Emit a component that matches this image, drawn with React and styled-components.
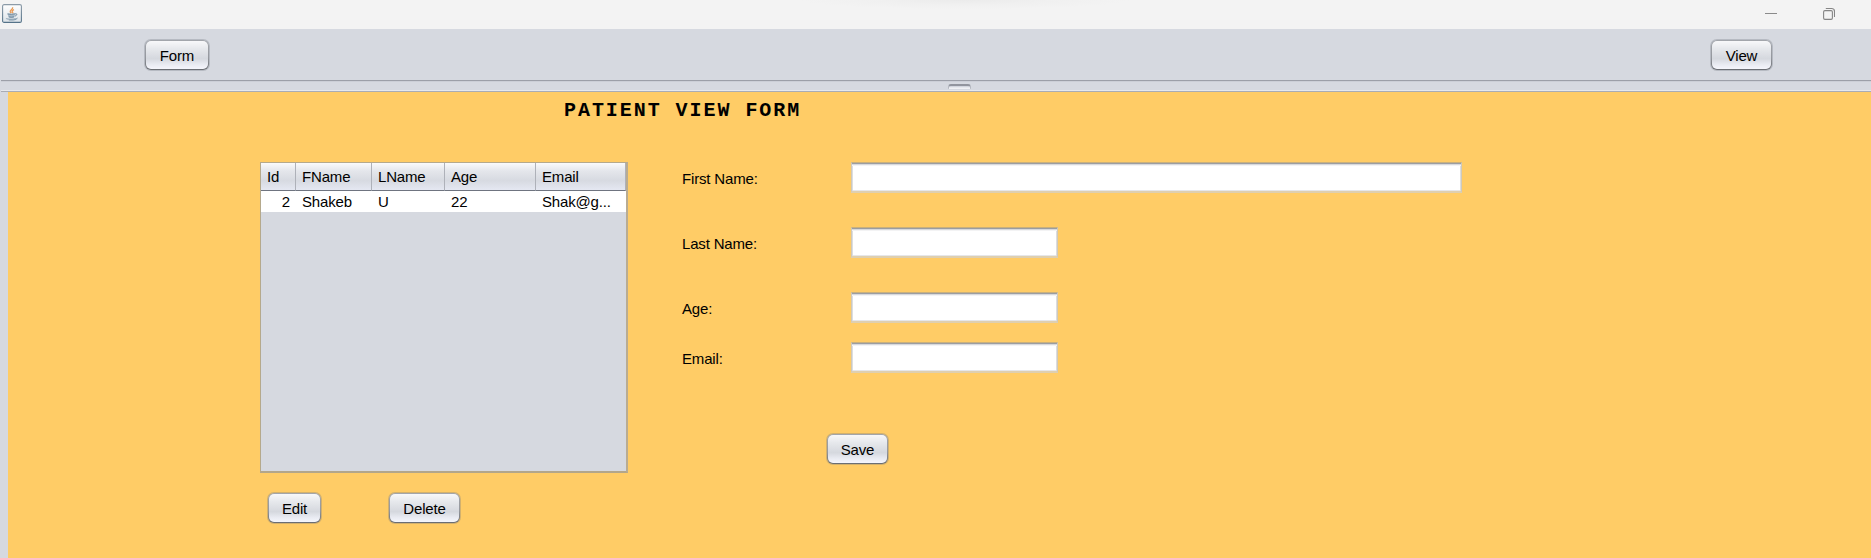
import React from "react";
import styled, { createGlobalStyle } from "styled-components";

const Global = createGlobalStyle`
  * { box-sizing: border-box; }
  body { margin: 0; overflow: hidden; font: 15px "Liberation Sans", Arial, sans-serif; letter-spacing: -0.17px; color: #000; }
`;

const Window = styled.div`
  display: flex;
  flex-direction: column;
  width: 1871px;
  height: 558px;
  background: #d6d9e0;
`;

const TitleBar = styled.header`
  display: flex;
  justify-content: space-between;
  height: 29px;
  padding: 4px 36px 0 2px;
  background: radial-gradient(ellipse 165px 9px at 965px 0, #ebebeb 0%, #f0f0f0 50%, #f3f3f3 100%) #f3f3f3;
`;

const Controls = styled.div`
  display: flex;
  gap: 46px;
`;

const Toolbar = styled.div`
  display: flex;
  justify-content: space-between;
  height: 51px;
  padding: 10px 98px 0 144px;
`;

const Button = styled.button`
  width: ${(p) => p.$width - 2}px;
  height: 30px;
  margin: 1px;
  padding: 1px 0 0;
  border: 1px solid transparent;
  border-bottom-width: 1.5px;
  border-radius: 6px;
  font: inherit;
  letter-spacing: inherit;
  color: #000;
  background:
    linear-gradient(#f8f8fa 0%, #e6e8ec 28%, #d5d8de 63%, #e9ebf2 84%, #f5f6fc 100%) padding-box,
    linear-gradient(#a3a6ac 0%, #94979d 60%, #696c72 100%) border-box;
  box-shadow: 0 0 0 1px rgba(110, 115, 125, 0.3);
`;

const Divider = styled.div`
  display: flex;
  height: 12px;
  margin-left: 1px;
  padding: 3px 0 0 947px;
  border-top: 1px solid #9c9fa8;
  border-bottom: 1px solid #a9acb5;
  box-shadow: inset 0 1px #cccfd7, inset 0 -1px #e6e8ed;
`;

const Grip = styled.div`
  width: 23px;
  height: 5px;
  border: 1px solid #b5b8c0;
  border-top: 2px solid #92959e;
  border-bottom: 0;
  border-radius: 3px 3px 1px 1px;
  background: linear-gradient(#d3d6de 30%, #f0f1f4 60%);
`;

const View = styled.main`
  flex: 1;
  margin-left: 8px;
  background: #ffcc66;
`;

const Heading = styled.h1`
  height: 70px;
  margin: 0;
  padding: 6px 0 0 556px;
  font: bold 20px/26px "Courier New", "Liberation Mono", monospace;
  letter-spacing: 1.95px;
  white-space: nowrap;
`;

const Content = styled.div`
  display: flex;
  padding-left: 252px;
`;

const TablePanel = styled.section`
  width: 368px;
`;

const TableFrame = styled.div`
  height: 311px;
  border: 1px solid #b5a98c;
  border-bottom: 2px solid #b3a68a;
  border-right: 2px solid #b9ac92;
  background: #d6d9e0;
`;

const Table = styled.table`
  width: 365px;
  table-layout: fixed;
  border-collapse: separate;
  border-spacing: 0;
  white-space: nowrap;

  th {
    height: 28px;
    padding: 0 0 1px 6px;
    font-weight: normal;
    text-align: left;
    border-right: 1px solid #aeb1b9;
    border-bottom: 1px solid #6f7480;
    background: linear-gradient(#fafafb 0%, #e4e6eb 30%, #d7dae1 65%, #e5e8f2 100%);
  }

  td {
    height: 21px;
    padding: 0 0 1px 6px;
    background: #fff;
  }

  td:first-child {
    padding-right: 6px;
    text-align: right;
  }
`;

const TableActions = styled.div`
  display: flex;
  gap: 66px;
  padding: 19px 0 0 7px;
`;

const Form = styled.form`
  width: 800px;
  margin-left: 54px;
`;

const Field = styled.label`
  display: flex;
  height: 31px;
  margin-bottom: ${(p) => p.$gap}px;
  line-height: 34px;

  span { width: 169px; }
`;

const Input = styled.input`
  width: ${(p) => p.$width}px;
  height: 31px;
  padding: 0 7px;
  border: 1px solid #cfc9ba;
  border-top: 1px solid #c9b07c;
  border-bottom: 2px solid #dfcfaf;
  border-radius: 0;
  font: inherit;
  background: #fff;
  box-shadow: inset 0 1px #9b9da1, inset 0 2px #d8d9dc, inset 0 3px #f3f3f4,
    inset 1px 0 #dcdddf, inset -1px 0 #dcdddf, inset 0 -1px #e6e7e9;
  outline: none;
`;

const SaveRow = styled.div`
  display: flex;
  padding: 12px 0 0 144px;
`;

const JavaIcon = () => (
  <svg width="20" height="19" viewBox="0 0 20 19">
    <defs>
      <linearGradient id="tile" x2="0" y2="1">
        <stop offset="0" stopColor="#ffffff" />
        <stop offset="1" stopColor="#dde3e8" />
      </linearGradient>
      <linearGradient id="edge" x2="0" y2="1">
        <stop offset="0" stopColor="#8c9ba8" />
        <stop offset="1" stopColor="#557389" />
      </linearGradient>
    </defs>
    <rect x=".6" y=".6" width="18.8" height="17.8" rx="1.5" fill="url(#tile)" stroke="url(#edge)" strokeWidth="1.1" />
    <path d="M10.6 3.2C11.4 5.2 7.6 6 8.2 7.7c.2.6.8 1 1.2 1.5M12 5.6c-2.2.9-2.2 1.9-1.4 2.6.3.4.2.7-.1 1" fill="none" stroke="#e89a55" strokeWidth="1.3" />
    <path d="M5.5 9.8q4.2.9 7.6-.1l-.9 3.6q-2.8.8-5.6 0z" fill="#a9bac7" />
    <path d="M5.5 9.9q4.2.8 7.4-.1M6.8 12.9q2.7.7 5.2 0M13.1 9.9c2.7-.6 2 1.8-.4 2.2" fill="none" stroke="#66839a" strokeWidth="1" />
    <path d="M4.2 14.2c-.8 1.3 9.6 1.4 11.4-.2M6.8 16q4.6.4 7.6-.6" fill="none" stroke="#7b94a7" strokeWidth=".9" />
  </svg>
);

const MinimizeIcon = () => (
  <svg width="12" height="18" viewBox="0 0 12 18">
    <path d="M0 9.5h12" stroke="#8a8a8a" />
  </svg>
);

const RestoreIcon = () => (
  <svg width="12" height="18" viewBox="0 0 12 18" fill="none" stroke="#858585" strokeWidth="1.1">
    <rect x=".6" y="6.6" width="8.8" height="8.8" rx="1.3" />
    <path d="M2.8 4.5h5.8q2.9 0 2.9 2.9v5.7" />
  </svg>
);

const columns = [
  ["Id", 35],
  ["FName", 76],
  ["LName", 73],
  ["Age", 91],
  ["Email", 90],
];
const rows = [["2", "Shakeb", "U", "22", "Shak@g..."]];
const fields = [
  { label: "First Name:", width: 611, gap: 34 },
  { label: "Last Name:", width: 207, gap: 34 },
  { label: "Age:", width: 207, gap: 19 },
  { label: "Email:", width: 207, gap: 48 },
];

export default function App() {
  return (
    <Window>
      <Global />
      <TitleBar>
        <JavaIcon />
        <Controls>
          <MinimizeIcon />
          <RestoreIcon />
        </Controls>
      </TitleBar>
      <Toolbar>
        <Button $width={66}>Form</Button>
        <Button $width={63}>View</Button>
      </Toolbar>
      <Divider>
        <Grip />
      </Divider>
      <View>
        <Heading>PATIENT VIEW FORM</Heading>
        <Content>
          <TablePanel>
            <TableFrame>
              <Table>
                <colgroup>
                  {columns.map(([name, width]) => (
                    <col key={name} width={width} />
                  ))}
                </colgroup>
                <thead>
                  <tr>
                    {columns.map(([name]) => (
                      <th key={name}>{name}</th>
                    ))}
                  </tr>
                </thead>
                <tbody>
                  {rows.map((row) => (
                    <tr key={row[0]}>
                      {row.map((cell, i) => (
                        <td key={i}>{cell}</td>
                      ))}
                    </tr>
                  ))}
                </tbody>
              </Table>
            </TableFrame>
            <TableActions>
              <Button $width={55}>Edit</Button>
              <Button $width={73}>Delete</Button>
            </TableActions>
          </TablePanel>
          <Form>
            {fields.map((f) => (
              <Field key={f.label} $gap={f.gap}>
                <span>{f.label}</span>
                <Input $width={f.width} />
              </Field>
            ))}
            <SaveRow>
              <Button type="button" $width={63}>Save</Button>
            </SaveRow>
          </Form>
        </Content>
      </View>
    </Window>
  );
}
